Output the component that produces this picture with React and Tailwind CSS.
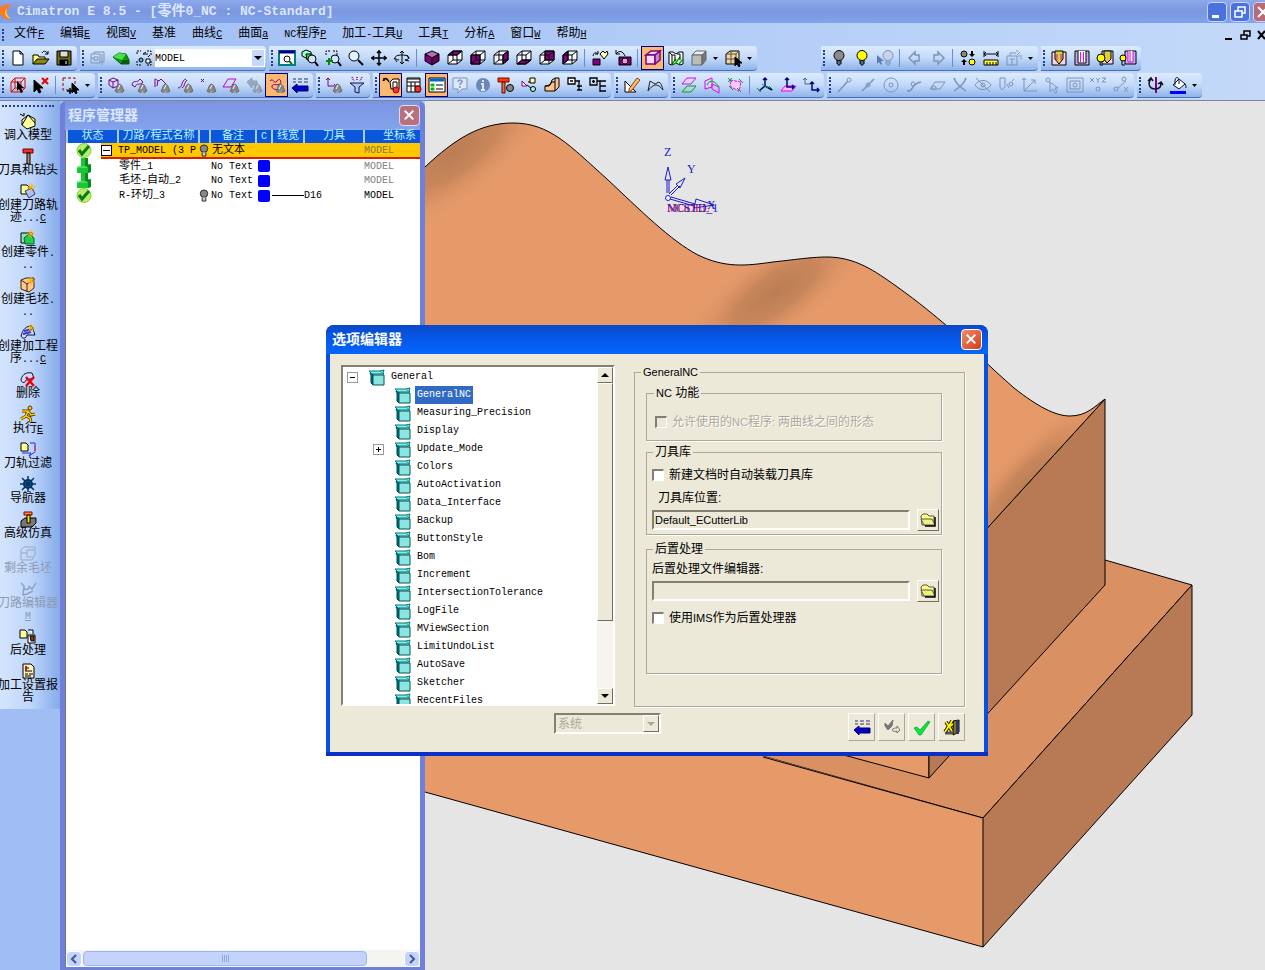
import React, { useState } from 'react';

const PURPLE = '#800080';
const GRAY = '#7f93b5';

// --- Icon pieces ---

const cubeFaces = {
  top: '2,6 7,2 16,2 11,6',
  front: '2,6 11,6 11,15 2,15',
  right: '11,6 16,2 16,11 11,15',
  bottom: '2,15 7,11 16,11 11,15',
  back: '7,2 16,2 16,11 7,11',
  left: '2,6 7,2 7,11 2,15',
};

const cube = (face) => (
  <g stroke="#000">
    <path d="M2 6l5-4h9v9l-5 4H2z" fill="#f4f8ff" stroke="none" />
    <polygon points={cubeFaces[face]} fill={PURPLE} />
    <path d="M2 6h9v9H2zM7 2h9v9H7zM2 6l5-4M11 6l5-4M11 15l5-4M2 15l5-4" />
  </g>
);

const bell = (
  <g>
    <path d="M8 15c2-2 1-5 4-7 4 1 3 4 5 7-2 2-7 2-9 0z" fill="#888" stroke="#666" />
    <path d="M11 13l2-4" stroke="#fff" />
    <path d="M11 16h3" stroke="#bbb" />
  </g>
);

const bulb = (color, line = '#000') => (
  <g stroke={line}>
    <circle cx="9" cy="6.500" r="5" fill={color} />
    <path d="M7 11v4h4v-4M7 13h4M8 16h2" />
  </g>
);

const star = <path d="M12 1v8M8 5h8M9.500 2.500l5 5M14.500 2.500l-5 5" stroke="#ffb400" />;

const lens = (
  <g>
    <circle cx="11" cy="10" r="4" fill="#cfe6ff" stroke="#000" />
    <path d="M14 13l3 4" stroke="#000" strokeWidth="2" />
  </g>
);

const icons = {
  new: <path d="M4 2h7l3 3v11H4zM11 2v3h3" fill="#fff" />,
  open: <g><path d="M1 15V6h5l1 2h6v2" fill="#ffff80" /><path d="M1 15l4-5h12l-4 5z" fill="#8a8a10" /><path d="M10 4c2-3 4-2 6 1M16 2v3h-3" /></g>,
  save: <g><path d="M2 2h14v14H2z" fill="#6b6b10" /><path d="M5 2h8v6H5z" fill="#ddd" /><path d="M5 11h8v5H5z" fill="#000" /><path d="M11 12v3" stroke="#fff" /></g>,
  part: <g stroke={GRAY}><path d="M2 5h9v9H2zM5 5V3h10v10h-4M5 8h4v3H5zM2 9h3M13 5v11" /></g>,
  greenPart: <g><path d="M1 8l6-4 7 1 3 6v4H9z" fill="#0a9a0a" stroke="#052" /><path d="M1 8l6-4 7 1-4 6z" fill="#4be04b" stroke="none" /><path d="M9 15h8v-4l-7 0z" fill="#0a5a0a" stroke="none" /></g>,
  swap: <g><path d="M2 5V2h4M12 2h4v4M16 12v4h-4M6 16H2v-4" strokeDasharray="2 1" /><circle cx="6" cy="11" r="2" fill="#5bd" /><path d="M11 10h4v4h-4zM8 5l3-2M8 5h5M13 8l2-2" fill="#fff" /></g>,
  winZoom: <g><path d="M1 2h16v14H1z" fill="#fff" stroke="#008080" strokeWidth="2" /><path d="M1 3h16" stroke="#000080" strokeWidth="3" /><circle cx="9" cy="10" r="3" stroke="#000" /><path d="M11 12l3 3" stroke="#008000" strokeWidth="2" /></g>,
  zoomPart: <g><path d="M1 3l4-2 5 2v5L5 9 1 7z" fill="#9fc" /><path d="M5 5h6v6H6z" fill="#3d3" />{lens}</g>,
  zoomPlus: <g><path d="M2 6V2h4M9 2h4v4" strokeDasharray="2 1" />{lens}<path d="M5 9v7M2 12h7" stroke="#080" strokeWidth="2" /></g>,
  zoom: <g><circle cx="7" cy="7" r="5" fill="#e4f1ff" /><path d="M11 11l5 5" strokeWidth="2" /></g>,
  pan: <path d="M9 1v16M1 9h16M7 4l2-2 2 2M7 14l2 2 2-2M4 7L2 9l2 2M14 7l2 2-2 2" strokeWidth="1.500" />,
  rotate: <g><path d="M9 2v13M7 4l2-2 2 2M7 13l2 2 2-2" /><path d="M6 11c-6-1-5-5 3-5s9 4 3 5M4 13l-3-4M12 11l4 1M14 6l2 4" /></g>,
  iso: <g><path d="M2 5l7-3 7 3-7 4z" fill="#b070b0" /><path d="M2 5l7 4v7l-7-4z" fill={PURPLE} /><path d="M16 5L9 9v7l7-4z" fill="#600060" /></g>,
  cubeTop: cube('top'),
  cubeFront: cube('front'),
  cubeRight: cube('right'),
  cubeBottom: cube('bottom'),
  cubeBack: cube('back'),
  cubeLeft: cube('left'),
  render: <g><path d="M2 10h7v6H2z" fill={PURPLE} /><path d="M9 5l3-3 2 2 2-2 1 3-4 5z" fill="#ffffb0" /><path d="M2 7c1-4 3-4 5-2M7 2v3H4" /></g>,
  camera: <g><path d="M5 8h12v8H5z" fill={PURPLE} /><circle cx="11" cy="12" r="3" fill="#e9d" /><path d="M2 5c3-4 7-3 9 2M2 1v4h4" /></g>,
  shadeCube: <g stroke={PURPLE} strokeWidth="1.500"><path d="M2 6l5-4h9l-5 4z" fill="#fde" /><path d="M2 6h9v9H2z" fill="#f7d9f0" /><path d="M11 6l5-4v9l-5 4z" fill="#b590c0" /></g>,
  section: <g><path d="M2 3h4l3 2 3-2h4v12l-3 1-4-2-4 2-3-1z" fill="#fff" /><path d="M5 15l4-5M8 15l5-7M12 15l4-5" stroke="#0a0" strokeWidth="1.500" /><path d="M5 6h3v6M10 5h3v6M2 3l3 3v9" /></g>,
  grayCube: <g stroke="#666"><path d="M2 6l4-4h10l-4 4z" fill="#eee" /><path d="M2 6h10v10H2z" fill="#bbb" /><path d="M12 6l4-4v9l-4 5z" fill="#777" /></g>,
  pickCube: <g><path d="M2 5l4-3h9v9l-3 4H2z" fill="#f3d5a8" /><path d="M2 5h10v10M12 5l3-3M7 2v13M2 10h13" stroke="#553" /><path d="M11 8v9l2-2 2 3 1-1-1-3h3z" fill="#000" /></g>,
  bulbGray: bulb('#8a8a8a'),
  bulbYellow: bulb('#ffff00'),
  bulbPick: <g><path d="M1 6v9l2-2 2 3 1-1-1-3h3z" fill="#5a7bb5" stroke="none" /><g transform="translate(3 0)">{bulb('#c5d3ea', GRAY)}</g></g>,
  back: <path d="M3 9l6-6v3h4v6H9v3z" stroke={GRAY} strokeWidth="1.500" />,
  forward: <path d="M15 9L9 3v3H5v6h4v3z" stroke={GRAY} strokeWidth="1.500" />,
  bulbSwap: <g><circle cx="5" cy="5" r="3" fill="#888" /><circle cx="13" cy="13" r="3" fill="#ff0" /><path d="M13 2v4M5 16v-4" strokeWidth="2" /><path d="M10 5h6l-3 3zM2 13h6l-3-3z" fill="#000" stroke="none" /></g>,
  measure: <g><path d="M2 2v6M16 2v6M2 5h14M4 3L2 5l2 2M14 3l2 2-2 2" /><path d="M2 11h14v5H2z" fill="#ffff40" /><path d="M5 13v3M8 13v3M11 13v3M14 13v3" /></g>,
  setNew: <g stroke={GRAY}><path d="M2 7h10v9H2zM5 7V4h6M5 10h5M7 10v6M12 6l3-3M13 7h4M12 3V1M15 9l2 1" /></g>,
  tool1: <g><path d="M2 3h14v13H2z" fill="#fbd0ee" /><path d="M5 2h8v8l-4 5-4-5z" fill="#d9d040" /><path d="M7 5v6M11 5v6" stroke="#d0109a" /></g>,
  tool2: <g><path d="M2 2h14v14H2z" fill="#c8b0f0" /><path d="M5 2v12h8V2" fill="#fff" /><path d="M7.500 3v10M10.500 3v10" stroke="#f0f" /></g>,
  tool3: <g><path d="M6 2h11v13H6z" fill="#fbd0ee" /><path d="M8 2h7v8l-4 4-3-4z" fill="#d9d040" /><circle cx="5" cy="9" r="4" fill="#ff0" /><path d="M4 13v3h3" /></g>,
  tool4: <g><path d="M6 2h11v13H6z" fill="#c8b0f0" /><path d="M9 2v11h5V2M11 2v11" stroke="#d0d" fill="#fff" /><circle cx="4" cy="9" r="3" fill="#ff0" /><path d="M3 12v4h3" /></g>,

  pickFace: <g stroke="#d00"><path d="M2 6h10v10H2zM2 6l4-4h10v10l-4 4M6 2v10h10M12 6l4-4M2 16l4-4" /><path d="M8 5v10l2-2 2 4 2-1-2-4h3z" fill="#000" stroke="none" /></g>,
  pickDel: <g><path d="M2 4v12l3-3 2 4 2-1-2-4h4z" fill="#000" /><path d="M10 2l6 6M16 2l-6 6" stroke="#e00" strokeWidth="2" /></g>,
  pickBox: <g><path d="M1 2h12v12H1z" stroke="#900" strokeDasharray="3 2" /><path d="M10 7v10l2-2 2 3 1-1-1-3h3z" fill="#000" /><path d="M5 15h6M8 12v6" strokeWidth="1.500" /></g>,
  f1: <g><path d="M2 4l4-2 5 2v6l-5 2-4-3zM2 4l4 2 5-2M6 6v6" stroke={PURPLE} />{bell}</g>,
  f2: <g><path d="M2 9c1-6 5-1 8-6l3 3c-3 4-6 0-8 5z" stroke={PURPLE} />{bell}</g>,
  f3: <g><path d="M2 11V3c2 0 3 4 6 0l5 5M5 4l-1 6" stroke={PURPLE} />{bell}</g>,
  f4: <g><path d="M2 12c5 0 3-8 8-9M6 12c3-1 2-6 5-8" stroke={PURPLE} />{bell}</g>,
  f5: <g><path d="M2 3l3 3M5 3L2 6" stroke={PURPLE} />{bell}</g>,
  f6: <g><path d="M1 11l5-8h8l-5 8z" stroke="#c0c" />{bell}</g>,
  f7: <g opacity=".6"><path d="M2 6l5-4v3h5v4H7v3z" fill="#789" stroke="#678" />{bell}</g>,
  f8: <g><path d="M2 5c3-4 4 4 7 0s5 1 3 3-7-1-8 2 5 4 8 4" stroke={PURPLE} />{bell}</g>,
  listBack: <g><path d="M1 12l5-4v2h11v5H6v2z" fill="#00c" stroke="#006" /><path d="M2 3h3M7 3h4M13 3h4M2 6h3M7 6h4M13 6h4" stroke="#336" /></g>,
  ucsBell: <g><path d="M3 2v8h8M1 4l2-2 2 2M9 8l2 2-2 2" stroke={PURPLE} />{bell}</g>,
  filter: <g><path d="M2 7h14l-5 4v6l-4-1v-5z" fill="#adc8f5" stroke="#115" /><path d="M4 1l2 4M9 1v4M14 1l-2 4" stroke={PURPLE} strokeDasharray="1 1" strokeWidth="1.500" /></g>,
  jobA: <g><path d="M8 6l3-3h6v10H9z" fill="#fff3dc" /><path d="M11 6h4v7h-4z" fill="#fff" /><path d="M1 5c2-4 4-3 6 1M2 2v3" strokeWidth="1.500" /><circle cx="14" cy="14" r="3" fill="#e33" stroke="#a00" /></g>,
  jobB: <g><path d="M2 2h13v14H2z" fill="#fff" /><path d="M2 6h13M2 10h13M6 6v10M10 6v10M2 3h13" /><circle cx="13" cy="13" r="3" fill="#e33" stroke="#700" /></g>,
  jobList: <g><path d="M1 2h16v14H1z" fill="#fff" /><path d="M2 4h14" stroke="#06c" strokeWidth="3" /><path d="M3 8h3v2H3zM3 12h3v2H3z" fill="#0b0" stroke="#0b0" /><path d="M8 9h7M8 13h7" /></g>,
  help: <g stroke={GRAY}><path d="M2 2h14v11h-5l-4 4v-4H2z" fill="#dbe8fb" /><path d="M7 6c0-3 5-2 4 0-1 1-2 1-2 3M9 10v2" strokeWidth="1.500" /></g>,
  info: <g><circle cx="9" cy="9" r="7" fill="#6f87b8" stroke="none" /><path d="M9 4v2M7 8h2v6M7 14h4" stroke="#dbe8fb" strokeWidth="2" /></g>,
  drill: <g><path d="M1 2h11v4H1z" fill="#e40" stroke="#800" /><path d="M5 6h3v11H5z" fill="#e8703a" stroke="#600" /><circle cx="13" cy="12" r="3.500" fill="#888" /></g>,
  nodes: <g><path d="M2 5l5 5H2z" fill="#fff" stroke={PURPLE} /><path d="M10 2h5v5h-5z" fill="#ffa" /><circle cx="13" cy="13" r="2.500" fill="#9fd" /><path d="M7 9l4 3M8 6h2" /></g>,
  stock: <path d="M2 10l5-1 2-5 3-2h4v9l-4 4H2zM9 6h3V2M12 6v9M2 10h4l3-4" fill="#ffc48a" />,
  tree1: <path d="M2 2h7v6H2zM4 5h3M9 5h5M13 5v9M11 10h5M11 14h5" fill="#fff" strokeWidth="1.300" />,
  tree2: <path d="M1 2h7v7H1zM3 5.500h3M4.500 4v3M8 5h9M11 5v11M11 10h6M11 15h6" strokeWidth="1.300" />,
  sketch: <g><path d="M2 5v11h11z" fill="#fff" /><path d="M6 13l8-11 3 2-8 10-3 2z" fill="#fb6" stroke="#840" /></g>,
  poly: <path d="M2 15l2-10 5 3 4-2c3 2 3 5 4 8-3-4-5-5-8-5-3 1-5 3-7 6" stroke="#222" />,
  p1: <g><path d="M2 8l5-6h9l-5 6z" stroke="#e0e" /><path d="M2 16l5-6h9l-5 6z" stroke="#0a0" /></g>,
  p2: <g><path d="M2 13V5l7-3v9zM9 8l7 3v6l-7-4z" stroke="#e0e" /><path d="M4 9c3-7 9-3 12 2" stroke="#0a0" /></g>,
  p3: <g><path d="M4 4l11 2-2 9-8-4z" stroke="#e0e" strokeDasharray="3 1" fill="#fcf" /><path d="M2 2l4 4M6 2L2 6M13 3l4 4M11 12l4 4M3 10l4 4" stroke="#0a0" /></g>,
  u1: <g stroke="#008"><path d="M9 2v8l7 4M9 10l-6 5M7 4l2-2 2 2" strokeWidth="1.500" /><path d="M1 12l4 4M13 10l4 4M6 8l6 4" stroke="#0a0" /></g>,
  u2: <g><path d="M2 15l4-5h11l-4 5z" stroke="#e0e" fill="#fbf" /><path d="M8 2v9h7M6 4l2-2 2 2M13 9l2 2-2 2" stroke="#008" strokeWidth="1.500" /></g>,
  u3: <g><path d="M3 2v6h5M1 4l2-2 2 2" stroke="#567" /><path d="M10 6v8h7M8 8l2-2 2 2M15 12l2 2-2 2" stroke="#008" strokeWidth="1.500" /></g>,
  s1: <g stroke={GRAY}><path d="M2 16L12 5" strokeWidth="1.500" /><circle cx="13" cy="4" r="2" /></g>,
  s2: <g stroke={GRAY}><path d="M3 15L15 3" strokeWidth="1.500" /><circle cx="9" cy="9" r="2" /></g>,
  s3: <g stroke={GRAY}><circle cx="9" cy="9" r="7" /><circle cx="9" cy="9" r="2" /></g>,
  s4: <g stroke={GRAY}><path d="M2 15c7 1 3-7 14-9" strokeWidth="1.500" /><circle cx="8" cy="8" r="2" /></g>,
  s5: <g stroke={GRAY}><path d="M2 13l5-7h10l-5 7z" /><circle cx="6" cy="12" r="2" /></g>,
  s6: <g stroke={GRAY}><path d="M3 2c2 6 6 9 12 13M15 2C13 8 9 11 3 15" strokeWidth="1.500" /></g>,
  s7: <g stroke={GRAY}><path d="M1 9c4-6 12-6 16 0-4 6-12 6-16 0zM2 2l14 14" /><circle cx="9" cy="9" r="2" /></g>,
  s8: <g stroke={GRAY}><path d="M3 2h5v9l-3 3-2-3zM10 8l2 4M17 3l-2 2" /><circle cx="14" cy="8" r="2" /></g>,
  s9: <g stroke={GRAY}><path d="M4 2v13h13M2 4l2-2 2 2M4 15L15 4M15 8V4h-4" /></g>,
  s10: <g stroke={GRAY}><circle cx="5" cy="4" r="2" /><path d="M7 6v10l3-3 2 4 2-1-2-4h3z" /></g>,
  s11: <g stroke={GRAY}><path d="M1 2h16v14H1zM4 5h10v8H4z" /><circle cx="9" cy="9" r="2" /></g>,
  s12: <g stroke={GRAY}><path d="M1 2l4 4M5 2L1 6M7 2l2 2 2-2M9 4v3M13 2h4l-4 4h4" /><circle cx="9" cy="13" r="2" /></g>,
  s13: <g stroke={GRAY}><circle cx="12" cy="3" r="2" /><circle cx="4" cy="13" r="2" /><path d="M6 12l8-7M12 11l4 5M16 11l-4 5" /></g>,
  axis: <g><path d="M10 1v16" stroke={PURPLE} strokeWidth="2" /><path d="M5 3C1 8 4 13 9 13s7-3 5-7M2 5l3-3 2 3M12 8l3-2 2 3" stroke="#112" strokeWidth="1.500" /></g>,
  fill: <g><path d="M1 15h16v3H1z" fill="#00f" stroke="none" /><path d="M4 9l6-6 6 5-6 5z" fill="#fff" stroke="#113" /><path d="M6 9V4c1-4 4-3 4 1v3M15 7c2 1 2 3 2 5" stroke="#113" /></g>,

  loadModel: <g><path d="M3 8l6-5 7 4v7l-8 3-5-4z" fill="#ffffa0" /><path d="M9 3l-6 10M9 3l7 8M1 2l4 2M5 1v3" /></g>,
  cutter: <g><path d="M4 2h10v4H4z" fill="#e32" stroke="#700" /><path d="M8 6h3v11H8z" fill="#b86" /></g>,
  newPath: <g><path d="M2 3h6l2 2v7H2z" fill="#ff9" /><path d="M6 9l7-3 3 6-6 4z" fill="#aac4f0" stroke="#336" />{star}</g>,
  newPart: <g><path d="M2 4h11v10H2z" fill="#9db" /><path d="M5 9l5-4 5 4v6H6z" fill="#2c4" stroke="#063" />{star}</g>,
  newStock: <g><path d="M2 4l5-2h8v10l-5 4-8-3z" fill="#ffc990" stroke="#420" /><path d="M2 4l6 4v8M8 8l7-4" stroke="#420" />{star}</g>,
  newProc: <g><path d="M2 13c2-7 5-10 11-10l3 9H8c-1 4-5 4-6 1z" fill="#c9daff" stroke="#113" /><path d="M5 8l9-2M4 11l8-2" stroke="#33c" strokeWidth="2" />{star}</g>,
  remove: <g><path d="M2 9c2-5 5-7 11-6l2 5-8 2c-1 4-5 3-5-1z" fill="#c9daff" stroke="#113" /><path d="M7 7l8 9M15 7l-8 9" stroke="#e00" strokeWidth="2.500" /></g>,
  run: <g><circle cx="11" cy="3" r="2" fill="#fc0" stroke="#630" /><path d="M3 6l6 0 3 4 4-1M9 6l-2 5 4 2 1 4M7 11l-5 3" stroke="#430" strokeWidth="3" /><path d="M3 6l6 0 3 4 4-1M9 6l-2 5 4 2 1 4M7 11l-5 3" stroke="#fc0" strokeWidth="1.500" /></g>,
  pathFilter: <g><path d="M2 3h5l2 2v6H2z" fill="#ff9" /><path d="M11 3h5v8M3 13h9l-2 3 6-4" stroke="#22e" /><path d="M16 6v6" stroke="#e33" /></g>,
  navigator: <g stroke="#036"><circle cx="9" cy="9" r="4" fill="#39c" strokeWidth="2" /><path d="M9 1v16M1 9h16M3 3l12 12M15 3L3 15" strokeWidth="1.500" /></g>,
  simulate: <g><path d="M2 11l4-3h11v5l-4 4H2z" fill="#777" /><path d="M5 2h8v3H5z" fill="#f83" stroke="#800" /><path d="M8 5h3v8H8z" fill="#fd0" /></g>,
  restStock: <g stroke="#9aa7bd"><path d="M2 5l3-3h11v8l-3 5H2zM2 8h6v4h6M8 8V5h8" /></g>,
  pathEdit: <g stroke="#8fa3c4"><path d="M2 3l3 3-1 9 4-1M5 8c2 3 6 1 5-2l3 3 4-6M8 14l6-3" strokeWidth="1.500" /></g>,
  post: <g><path d="M1 3h5l2 2v6H1z" fill="#ff9" /><path d="M9 8h7v8H9zM9 3h5v4" fill="#fff" /><path d="M11 9h4v5h-3z" fill="#840" /></g>,
  report: <g><path d="M4 2h8l3 3v11H4z" fill="#fff0c0" /><path d="M6 6h4M6 9h7M6 12h3M10 12h4M6 14h6" /><path d="M7 4v5" stroke="#930" strokeWidth="2" /></g>,

  folder: <g><path d="M2 5l2-2h4l2 2h5v9H3z" fill="#ffff80" stroke="#555" /><path d="M2 8h11l3 6H5z" fill="#f0f07a" stroke="#555" /><path d="M16 6v9H6" stroke="#000" strokeWidth="1.500" /></g>,
  apply: <g><path d="M2 5l3 3 5-6-1 6-4 4-3-4z" fill="#777" stroke="#777" /><path d="M9 12c1-2 3-2 5-2V8l3 4-3 3v-2c-3 1-4 0-5-1z" stroke="#777" /></g>,
  ok: <path d="M1 10l3-1 3 3 8-9 2 1-9 13H6z" fill="#0e3" stroke="#062" strokeWidth=".5" />,
  exit: <g><path d="M10 3l6-1v12l-6 3z" fill="#7a7a20" /><path d="M13 2v14h3V3z" fill="#336" stroke="none" /><path d="M2 15h8" strokeWidth="3" stroke="#555" /><path d="M3 4l6 9M9 3L2 14M6 9l4-3" stroke="#000" strokeWidth="3.500" /><path d="M3 4l6 9M9 3L2 14M6 9l4-3" stroke="#fe0" strokeWidth="2" /></g>,
  box: <g><path d="M2 5h3v12l-2-2V7z" fill="#007878" stroke="#045" /><path d="M1 3h11l4 3H4z" fill="#7ff0ee" stroke="#077" /><path d="M5 7h11v10H5z" fill="#8ae6e3" stroke="#055" /><path d="M12 3l4-1-1 3" fill="#7ff0ee" stroke="#077" /></g>,
};

const Icon = ({ name }) => (
  <svg viewBox="0 0 18 18" className="h-[18px] w-[18px] shrink-0" fill="none" stroke="#000" aria-hidden="true">
    {icons[name]}
  </svg>
);

// Latin runs are half the width of a Chinese character
const Txt = ({ children, latin = 'text-[10px]' }) =>
  String(children)
    .split(/([\u4e00-\u9fff]+)/)
    .filter(Boolean)
    .map((run, i) =>
      /[\u4e00-\u9fff]/.test(run) ? (
        <span key={i}>{run}</span>
      ) : (
        <span key={i} className={`${latin} whitespace-pre font-['Liberation_Mono',monospace]`}>{run}</span>
      )
    );

const menus = [
  ['文件', 'F'], ['编辑', 'E'], ['视图', 'V'], ['基准', ''], ['曲线', 'C'], ['曲面', 'a'],
  ['NC程序', 'P'], ['加工-工具', 'U'], ['工具', 'T'], ['分析', 'A'], ['窗口', 'W'], ['帮助', 'H'],
];

// '|' is a separator, 'v' a drop-down arrow, '*' marks a pressed button
const barFile = ['new', 'open', 'save'];
const barView = [
  'winZoom', 'zoomPart', 'zoomPlus', 'zoom', 'pan', 'rotate', '|', 'iso', 'cubeTop', 'cubeFront', 'cubeRight',
  'cubeBottom', 'cubeBack', 'cubeLeft', '|', 'render', 'camera', '|', '*shadeCube', 'section', 'grayCube', 'v', 'pickCube', 'v',
];
const barShow = ['bulbGray', 'bulbYellow', 'bulbPick', '|', 'back', 'forward', '|', 'bulbSwap', 'measure', 'setNew', 'v'];
const barTool = ['tool1', 'tool2', 'tool3', 'tool4'];
const secondRow = [
  ['pickFace', 'pickDel', '|', 'pickBox', 'v'],
  ['f1', 'f2', 'f3', 'f4', 'f5', 'f6', 'f7', '*f8', 'listBack'],
  ['ucsBell', 'filter'],
  ['*jobA', 'jobB', '*jobList', 'help', 'info', 'drill', 'nodes', 'stock', 'tree1', 'tree2'],
  ['sketch', 'poly'],
  ['p1', 'p2', 'p3', '|', 'u1', 'u2', 'u3'],
  ['s1', 's2', 's3', 's4', 's5', 's6', 's7', 's8', 's9', 's10', 's11', 's12', 's13'],
  ['axis', 'fill', 'v'],
];

function ToolGroup({ items, children }) {
  return (
    <div className="flex h-[25px] shrink-0 items-center rounded-r-sm border-b border-[#4a6fb5] bg-gradient-to-b from-[#dcebfe] via-[#c3daf9] to-[#8fb3ea] pr-[2px]">
      <span className="mx-[2px] h-4 w-0 border-l-2 border-dotted border-[#27408b]" />
      {items.map((item, i) => {
        if (item === '|') return <span key={i} className="mx-[3px] h-[18px] w-px bg-[#6a8ccb]" />;
        if (item === 'v') {
          return (
            <button key={i} aria-label="more" className="flex h-6 w-[11px] items-center justify-center">
              <svg viewBox="0 0 5 3" className="h-[3px] w-[5px]"><path d="M0 0h5L2.500 3z" /></svg>
            </button>
          );
        }
        const pressed = item[0] === '*';
        const name = pressed ? item.slice(1) : item;
        return (
          <button
            key={i}
            aria-label={name}
            className={`flex h-6 w-[23px] items-center justify-center ${pressed ? 'border border-[#000080] bg-[#fcb871]' : ''}`}
          >
            <Icon name={name} />
          </button>
        );
      })}
      {children}
    </div>
  );
}

function TitleBar() {
  return (
    <header className="flex h-[23px] items-center overflow-hidden bg-gradient-to-b from-[#8da9ec] via-[#7b96df] to-[#7fa4ea]">
      <svg viewBox="0 0 14 16" className="h-4 w-[14px] shrink-0" aria-hidden="true">
        <path d="M12 1C4-1-3 3 0 9c2 5 6 7 11 6-5-3-7-10 1-14z" fill="#ff7a1a" />
        <path d="M12 2C5 3 4 10 11 15 4 13 2 5 12 2z" fill="#ffe14a" />
      </svg>
      <h1 className="ml-[3px] truncate text-[14px] leading-[20px] font-bold text-[#dbe7ff]">
        <Txt latin="text-[13px]">Cimatron E 8.5 - [零件0_NC : NC-Standard]</Txt>
      </h1>
      <div className="-mr-2 ml-auto flex shrink-0 gap-[3px]">
        <button aria-label="Minimize" className="h-5 w-5 rounded-sm border border-[#c8d6f8] bg-[#4a72de]">
          <svg viewBox="0 0 18 18"><path d="M4 12h7v3H4z" fill="#fff" /></svg>
        </button>
        <button aria-label="Restore" className="h-5 w-5 rounded-sm border border-[#c8d6f8] bg-[#4a72de]">
          <svg viewBox="0 0 18 18" fill="none" stroke="#fff" strokeWidth="1.500"><path d="M4 8h7v6H4zM7 8V4h7v6h-3" /></svg>
        </button>
        <button aria-label="Close" className="h-5 w-5 rounded-sm border border-[#c8d6f8] bg-[#b96a78]">
          <svg viewBox="0 0 18 18" stroke="#fff" strokeWidth="2"><path d="M4 4l10 10M14 4L4 14" /></svg>
        </button>
      </div>
    </header>
  );
}

function MenuBar() {
  return (
    <nav className="flex h-[23px] items-center overflow-hidden pl-[2px]">
      <span className="h-3 w-0 border-l-2 border-dotted border-[#27408b]" />
      <ul className="ml-[10px] flex gap-4 text-[12px] leading-[16px] text-black">
        {menus.map(([label, key]) => (
          <li key={label} className="whitespace-nowrap">
            <a href="#menu">
              <Txt>{label}</Txt>
              <span className="font-['Liberation_Mono',monospace] text-[10px] underline">{key}</span>
            </a>
          </li>
        ))}
      </ul>
      <div className="-mr-1 ml-auto flex shrink-0">
        <button aria-label="Minimize document" className="w-4"><svg viewBox="0 0 16 16"><path d="M4 11h7v2H4z" /></svg></button>
        <button aria-label="Restore document" className="w-4"><svg viewBox="0 0 16 16" fill="none" stroke="#000" strokeWidth="1.500"><path d="M4 8h6v4H4zM7 8V4h6v5h-3" /></svg></button>
        <button aria-label="Close document" className="w-4"><svg viewBox="0 0 16 16" stroke="#000" strokeWidth="2"><path d="M5 4l7 8M12 4l-7 8" /></svg></button>
      </div>
    </nav>
  );
}

function Toolbars() {
  return (
    <div className="flex flex-col gap-[2px] overflow-hidden pb-[2px]">
      <div className="flex gap-[3px]">
        <ToolGroup items={barFile} />
        <ToolGroup items={['part', 'greenPart', 'swap']}>
          <select aria-label="Coordinate system" className="h-[18px] w-[110px] appearance-none bg-white font-['Liberation_Mono',monospace] text-[10px] text-black">
            <option>MODEL</option>
          </select>
          <svg viewBox="0 0 12 16" className="pointer-events-none -ml-[13px] h-4 w-3"><path d="M0 0h12v16H0z" fill="#c6d8fa" /><path d="M2 6h8l-4 4z" /></svg>
        </ToolGroup>
        <ToolGroup items={barView} />
        <div className="w-[58px]" />
        <ToolGroup items={barShow} />
        <ToolGroup items={barTool} />
      </div>
      <div className="flex gap-[3px]">
        {secondRow.map((items, i) => <ToolGroup key={i} items={items} />)}
      </div>
    </div>
  );
}

const commands = [
  { icon: 'loadModel', lines: ['调入模型'] },
  { icon: 'cutter', lines: ['刀具和钻头'] },
  { icon: 'newPath', lines: ['创建刀路轨', '迹...'], accel: 'C' },
  { icon: 'newPart', lines: ['创建零件.', '..'] },
  { icon: 'newStock', lines: ['创建毛坯.', '..'] },
  { icon: 'newProc', lines: ['创建加工程', '序...'], accel: 'C' },
  { icon: 'remove', lines: ['删除'] },
  { icon: 'run', lines: ['执行'], accel: 'E' },
  { icon: 'pathFilter', lines: ['刀轨过滤'] },
  { icon: 'navigator', lines: ['导航器'] },
  { icon: 'simulate', lines: ['高级仿真'] },
  { icon: 'restStock', lines: ['剩余毛坯'], disabled: true },
  { icon: 'pathEdit', lines: ['刀路编辑器', ''], accel: 'M', disabled: true },
  { icon: 'post', lines: ['后处理'] },
  { icon: 'report', lines: ['加工设置报', '告'] },
];

function CommandBar() {
  return (
    <aside className="w-[60px] shrink-0 overflow-hidden bg-[#a0bdf4]">
      <div className="flex flex-col items-center gap-[5px] bg-gradient-to-r from-[#d3e4fd] via-[#c0d7fb] to-[#86abea] pt-1 pr-1 pb-[5px]">
        <span className="h-0 w-[52px] border-t-2 border-dotted border-[#27408b]" />
        {commands.map((cmd) => (
          <button
            key={cmd.icon}
            disabled={cmd.disabled}
            className={`flex flex-col items-center text-[12px] leading-[12px] whitespace-nowrap ${cmd.disabled ? 'text-[#8d9bb5]' : 'text-black'}`}
          >
            <Icon name={cmd.icon} />
            {cmd.lines.map((line, i) => (
              <span key={i} className="block h-3">
                <Txt>{line}</Txt>
                {cmd.accel && i === cmd.lines.length - 1 && (
                  <span className="font-['Liberation_Mono',monospace] text-[10px] underline">{cmd.accel}</span>
                )}
              </span>
            ))}
          </button>
        ))}
      </div>
    </aside>
  );
}

const Check = () => (
  <svg viewBox="0 0 16 15" className="mx-auto h-[15px] w-4">
    <circle cx="8" cy="7.500" r="7" fill="#b5f06a" stroke="#8ad030" />
    <path d="M3 7l3 4 7-8" fill="none" stroke="#087a1a" strokeWidth="3" />
  </svg>
);

const Done = () => (
  <svg viewBox="0 0 16 15" className="mx-auto h-[15px] w-4">
    <path d="M5 0h6v6h4v7l-2 2H1V9l4-1z" fill="#16c832" />
    <path d="M9 0h3v7h3v7l-3 1V9H9z" fill="#078a20" />
    <path d="M1 9h10" stroke="#7ff08c" />
  </svg>
);

const Lamp = () => (
  <svg viewBox="0 0 10 14" className="h-[13px] w-[10px]">
    <circle cx="5" cy="5" r="4" fill="#888" stroke="#222" />
    <path d="M3 9v4h4V9" fill="#ccc" stroke="#222" />
  </svg>
);

const procedures = [
  { name: '零件_1' },
  { name: '毛坯-自动_2' },
  { name: 'R-环切_3', lamp: true, tool: 'D16' },
];

function ProcessManager() {
  return (
    <section className="flex w-[365px] shrink-0 flex-col rounded-t-md bg-[#6f80da] px-[5px] pb-1">
      <div className="flex h-[29px] items-center bg-gradient-to-b from-[#7b94e2] to-[#84a4ec]">
        <h2 className="ml-[3px] text-[14px] leading-[20px] font-bold text-[#dbe7ff]">程序管理器</h2>
        <button aria-label="Close panel" className="ml-auto h-[21px] w-[21px] rounded-sm border border-[#e4dbf0] bg-[#b8707f]">
          <svg viewBox="0 0 20 20" stroke="#fff" strokeWidth="2"><path d="M5 5l9 9M14 5l-9 9" /></svg>
        </button>
      </div>
      <div className="flex grow flex-col border-l border-[#777] bg-white">
        <table className="w-full table-fixed border-collapse text-[11px] leading-[13px] whitespace-nowrap text-black">
          <colgroup>
            <col className="w-[34px]" /><col className="w-[17px]" /><col className="w-[81px]" /><col className="w-[11px]" />
            <col className="w-[46px]" /><col className="w-4" /><col className="w-8" /><col className="w-[60px]" /><col />
          </colgroup>
          <thead>
            <tr className="h-[13px] bg-[#0a57dc] text-[#bff4ff] [&>th]:border-l-2 [&>th]:border-[#a8ccff] [&>th]:p-0 [&>th]:font-normal">
              <th colSpan={2}>状态</th>
              <th><Txt>刀路/程式名称</Txt></th>
              <th />
              <th>备注</th>
              <th><Txt>C</Txt></th>
              <th>线宽</th>
              <th>刀具</th>
              <th className="text-right"><span className="mr-1">坐标系</span></th>
            </tr>
          </thead>
          <tbody className="[&_td]:h-[15px] [&_td]:p-0">
            <tr>
              <td><Check /></td>
              <td className="border-b-2 border-[#d81e00] bg-[#ffc800]">
                <button aria-label="Collapse" className="flex h-[11px] w-[11px] items-center justify-center border border-black bg-white">
                  <span className="h-px w-[7px] bg-black" />
                </button>
              </td>
              <td className="overflow-hidden border-b-2 border-[#d81e00] bg-[#ffc800]"><Txt>TP_MODEL (3 P</Txt></td>
              <td className="border-b-2 border-[#d81e00] bg-[#ffc800]"><Lamp /></td>
              <td colSpan={4} className="border-b-2 border-[#d81e00] bg-[#ffc800]"><span className="ml-[2px]">无文本</span></td>
              <td className="border-b-2 border-[#d81e00] bg-[#ffc800] text-[#8a7a4a]"><Txt>MODEL</Txt></td>
            </tr>
            {procedures.map((row) => (
              <tr key={row.name}>
                <td>{row.lamp ? <Check /> : <Done />}</td>
                <td />
                <td><span className="ml-px"><Txt>{row.name}</Txt></span></td>
                <td>{row.lamp && <Lamp />}</td>
                <td><span className="ml-px"><Txt>No Text</Txt></span></td>
                <td><span className="mx-auto block h-3 w-3 rounded-[2px] bg-[#0000ff]" /></td>
                <td>{row.tool && <span className="block h-px w-full bg-black" />}</td>
                <td>{row.tool && <Txt>{row.tool}</Txt>}</td>
                <td className={row.tool ? 'text-black' : 'text-[#808080]'}><Txt>MODEL</Txt></td>
              </tr>
            ))}
          </tbody>
        </table>
        <div className="mt-auto flex h-[17px] items-center bg-[#f4f4f0]">
          <button aria-label="Scroll left" className="h-4 w-4 rounded-sm border border-white bg-[#c3d3fb]">
            <svg viewBox="0 0 14 14" fill="none" stroke="#3f5a8c" strokeWidth="2"><path d="M9 3L5 7l4 4" /></svg>
          </button>
          <div className="mx-px flex h-[15px] w-[284px] items-center justify-center gap-px rounded-sm border border-[#9db6ee] bg-[#c3d3fb]">
            {[0, 1, 2, 3].map((n) => <span key={n} className="h-[7px] w-px bg-[#8fa8e6]" />)}
          </div>
          <button aria-label="Scroll right" className="ml-auto h-4 w-4 rounded-sm border border-white bg-[#c3d3fb]">
            <svg viewBox="0 0 14 14" fill="none" stroke="#3f5a8c" strokeWidth="2"><path d="M5 3l4 4-4 4" /></svg>
          </button>
        </div>
      </div>
    </section>
  );
}

// Upper profile of the stock, from the left window edge to the right corner
const profile =
  'M0 66C30 38 55 22 88 22C125 22 145 45 182 78C214 108 246 140 273 154C300 167 320 165 348 161' +
  'C375 158 388 156 402 156C430 156 450 170 471 185C495 202 510 215 522 225C545 246 565 266 589 287' +
  'C612 305 630 315 645 315C662 315 670 305 680 298L504 491';

// Shaded stock model with the active coordinate system
function ModelView() {
  return (
    <div className="min-w-0 grow overflow-hidden bg-[#e5e5e5]">
      <svg viewBox="0 0 840 870" preserveAspectRatio="xMinYMin slice" className="h-full w-full" stroke="#000" strokeWidth="1" fill="none">
        <defs>
          <radialGradient id="shade">
            <stop offset="0" stopColor="#b47850" stopOpacity=".85" />
            <stop offset=".4" stopColor="#b47850" stopOpacity=".6" />
            <stop offset="1" stopColor="#e69a6a" stopOpacity="0" />
          </radialGradient>
          <clipPath id="surface">
            <path d={`${profile}L0 440z`} />
          </clipPath>
        </defs>
        <path d="M0 440L680 459L767 484L558 717L0 560z" fill="#d99164" />
        <path d="M0 560L558 717V846L0 691z" fill="#e69a6a" stroke="none" />
        <path d="M338 656L558 717M558 846L0 691" />
        <path d="M767 484V614L558 846V717z" fill="#b77a55" />
        <path d="M400 649L504 677V470L400 440z" fill="#e69a6a" />
        <path d="M680 298V484L504 677V491z" fill="#b77a55" />
        <g clipPath="url(#surface)" stroke="none">
          <path d="M0 0h700v500H0z" fill="#e69a6a" />
          <ellipse cx="30" cy="50" rx="130" ry="50" transform="rotate(-38 30 50)" fill="url(#shade)" />
          <ellipse cx="350" cy="192" rx="120" ry="44" transform="rotate(-36 350 192)" fill="url(#shade)" />
          <ellipse cx="600" cy="388" rx="130" ry="38" transform="rotate(-48 600 388)" fill="url(#shade)" />
        </g>
        <path d={profile} />
        <g stroke="#1a1ad0">
          <path d="M242 92V79M244 92V79M240 79h6l-3-13zM244 93l9-9M246 94l9-9M251 83l4 4 5-10zM246 96l24 7M245 98l24 7M271 98l-2 9 20-3z" />
          <circle cx="243" cy="97" r="2.500" fill="#fff" />
        </g>
        <g stroke="none" fill="#1a1ad0" fontFamily="'Liberation Serif', serif" fontSize="12">
          <text x="239" y="55">Z</text>
          <text x="262" y="72">Y</text>
          <text x="242" y="111" fill="#e01030">MODEL</text>
          <text x="242" y="111">NCSTD_1</text>
          <text x="282" y="108">X</text>
        </g>
      </svg>
    </div>
  );
}

const treeNodes = [
  'GeneralNC', 'Measuring_Precision', 'Display', 'Update_Mode', 'Colors', 'AutoActivation', 'Data_Interface', 'Backup',
  'ButtonStyle', 'Bom', 'Increment', 'IntersectionTolerance', 'LogFile', 'MViewSection', 'LimitUndoList', 'AutoSave',
  'Sketcher', 'RecentFiles',
];

const raised = 'border border-t-white border-l-white border-r-[#716f64] border-b-[#716f64] bg-[#ece9d8]';
const sunken = 'border-2 border-t-[#808075] border-l-[#808075] border-r-white border-b-white bg-[#ece9d8]';
const checkBox = 'h-3 w-3 shrink-0 appearance-none border border-t-2 border-l-2 border-t-[#808075] border-l-[#808075] border-r-white border-b-white';
const group = 'border border-[#aca899] shadow-[1px_1px_0_#fff]';

function OptionTree({ selected, onSelect }) {
  return (
    <div className="flex h-[341px] w-[274px] shrink-0 border-2 border-t-[#808075] border-l-[#808075] border-r-white border-b-white bg-white">
      <ul className="min-w-0 grow overflow-hidden pt-px font-['Liberation_Mono',monospace] text-[10px] leading-[18px] text-black">
        <li className="flex h-[18px] items-center pl-1">
          <button aria-label="Collapse General" className="flex h-[11px] w-[11px] items-center justify-center border border-[#999]"><span className="h-px w-[5px] bg-black" /></button>
          <span className="mr-[5px] ml-[10px]"><Icon name="box" /></span>
          General
        </li>
        {treeNodes.map((node) => (
          <li key={node} className="flex h-[18px] items-center pl-[30px]">
            {node === 'Update_Mode' ? (
              <button aria-label="Expand Update_Mode" className="flex h-[11px] w-[11px] items-center justify-center border border-[#999]">
                <svg viewBox="0 0 5 5" className="h-[5px] w-[5px]"><path d="M0 2h5v1H0zM2 0h1v5H2z" /></svg>
              </button>
            ) : (
              <span className="w-[11px]" />
            )}
            <span className="mr-[3px] ml-[10px]"><Icon name="box" /></span>
            <button
              onClick={() => onSelect(node)}
              className={`px-[2px] ${selected === node ? 'bg-[#316ac5] text-white' : ''}`}
            >
              {node}
            </button>
          </li>
        ))}
      </ul>
      <div className="flex w-4 shrink-0 flex-col bg-[#f6f4ec]">
        <button aria-label="Scroll up" className={`flex h-4 items-center justify-center ${raised}`}><svg viewBox="0 0 8 4" className="w-2"><path d="M4 0l4 4H0z" /></svg></button>
        <div className={`h-[238px] ${raised}`} />
        <button aria-label="Scroll down" className={`mt-auto flex h-4 items-center justify-center ${raised}`}><svg viewBox="0 0 8 4" className="w-2"><path d="M0 0h8L4 4z" /></svg></button>
      </div>
    </div>
  );
}

function Path({ id, value }) {
  return (
    <div className="flex items-center gap-[7px]">
      <input id={id} readOnly defaultValue={value} className={`h-5 w-[258px] min-w-0 px-px text-[11px] text-black ${sunken}`} />
      <button aria-label="Browse" className={`flex h-[22px] w-[22px] items-center justify-center ${raised}`}><Icon name="folder" /></button>
    </div>
  );
}

function OptionEditor() {
  const [selected, setSelected] = useState('GeneralNC');

  return (
    <div role="dialog" aria-labelledby="editor-title" className="absolute top-[224px] left-[326px] w-[662px] rounded-t-lg border-b-4 border-[#0a30c8] bg-[#0a50e0] px-1">
      <div className="flex h-[29px] items-center">
        <div className="-mx-1 flex h-full grow items-center rounded-t-lg bg-gradient-to-b from-[#0a49c8] via-[#0558ea] to-[#0566fd] px-[6px]">
          <h2 id="editor-title" className="text-[14px] leading-[20px] font-bold text-white">选项编辑器</h2>
          <button aria-label="Close" className="ml-auto h-[21px] w-[21px] rounded-sm border border-white bg-gradient-to-br from-[#f08a6a] to-[#d03a10]">
            <svg viewBox="0 0 20 20" stroke="#fff" strokeWidth="2"><path d="M5 5l9 9M14 5l-9 9" /></svg>
          </button>
        </div>
      </div>
      <div className="bg-[#ece9d8] pt-[11px] pr-[19px] pb-[11px] pl-[11px] font-['Liberation_Sans','Noto_Sans_CJK_SC',sans-serif] text-[12px] leading-[14px] text-black">
        <div className="flex gap-[19px]">
          <OptionTree selected={selected} onSelect={setSelected} />
          <fieldset className={`min-w-0 grow pr-[22px] pb-8 pl-[11px] ${group}`}>
            <legend className="-ml-[5px] px-[2px] text-[11px]">GeneralNC</legend>
            <fieldset className={`mt-[7px] h-[55px] pt-[15px] pl-2 ${group}`}>
              <legend className="-ml-px px-[2px]"><span className="text-[11px]">NC</span> 功能</legend>
              <label className="flex items-center gap-[5px] whitespace-nowrap text-[#aca899] [text-shadow:1px_1px_0_#fff]">
                <input type="checkbox" disabled className={`bg-[#ece9d8] ${checkBox}`} />
                <span>允许使用的<span className="text-[11px]">NC</span>程序<span className="text-[11px]">: </span>两曲线之间的形态</span>
              </label>
            </fieldset>
            <fieldset className={`mt-1 h-[90px] pt-[9px] pl-[5px] ${group}`}>
              <legend className="ml-px px-[2px]">刀具库</legend>
              <label className="flex items-center gap-[5px]">
                <input type="checkbox" className={`bg-white ${checkBox}`} />
                新建文档时自动装载刀具库
              </label>
              <label htmlFor="cutter-lib" className="mt-[9px] mb-1 ml-[6px] block">刀具库位置:</label>
              <Path id="cutter-lib" value="Default_ECutterLib" />
            </fieldset>
            <fieldset className={`mt-[7px] h-[132px] pt-[6px] pl-[5px] ${group}`}>
              <legend className="ml-px px-[2px]">后置处理</legend>
              <label htmlFor="post-editor" className="mb-1 block">后置处理文件编辑器:</label>
              <Path id="post-editor" value="" />
              <label className="mt-[9px] flex items-center gap-[5px]">
                <input type="checkbox" className={`bg-white ${checkBox}`} />
                <span>使用<span className="text-[11px]">IMS</span>作为后置处理器</span>
              </label>
            </fieldset>
          </fieldset>
        </div>
        <div className="mt-[6px] flex items-start">
          <div className="ml-[213px] flex items-center">
            <select aria-label="Level" disabled className={`h-[21px] w-[107px] appearance-none px-[2px] text-[12px] text-[#aca899] opacity-100 ${sunken}`}>
              <option>系统</option>
            </select>
            <span className={`pointer-events-none -ml-[18px] flex h-[17px] w-4 items-center justify-center ${raised}`}>
              <svg viewBox="0 0 8 4" className="w-2" fill="#aca899"><path d="M0 0h8L4 4z" /></svg>
            </span>
          </div>
          <div className="ml-auto flex gap-[3px]">
            {['listBack', 'apply', 'ok', 'exit'].map((name) => (
              <button key={name} aria-label={name} className="flex h-7 w-[27px] items-center justify-center border border-t-white border-l-white border-r-[#aca899] border-b-[#aca899]">
                <Icon name={name} />
              </button>
            ))}
          </div>
        </div>
      </div>
    </div>
  );
}

function App() {
  return (
    <div className="flex min-h-screen flex-col overflow-hidden bg-gradient-to-r from-[#9fbdf5] to-[#c4d9f9] font-['Liberation_Mono','Noto_Sans_CJK_SC',monospace]">
      <TitleBar />
      <MenuBar />
      <Toolbars />
      <main className="relative flex grow border-t border-[#7a86a0]">
        <CommandBar />
        <ProcessManager />
        <ModelView />
        <OptionEditor />
      </main>
    </div>
  );
}

export default App;
